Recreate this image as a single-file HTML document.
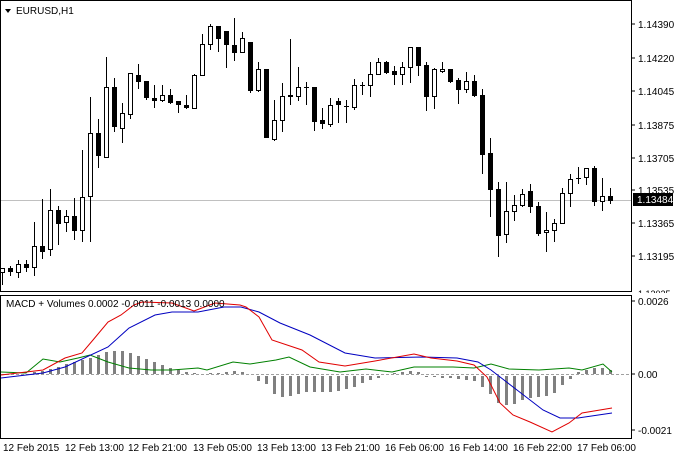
<!DOCTYPE html>
<html><head><meta charset="utf-8"><style>
html,body{margin:0;padding:0;background:#fff;}
svg{display:block;font-family:"Liberation Sans",sans-serif;font-size:10px;}
</style></head><body>
<svg id="s" width="674" height="455" xmlns="http://www.w3.org/2000/svg">
<rect x="0" y="0" width="674" height="455" fill="#fff"/>
<text x="638" y="297" font-size="9">1.13025</text>
<rect x="632" y="293" width="42" height="10" fill="#fff"/>
<rect x="0.5" y="0.5" width="631" height="291" fill="none" stroke="#000"/>
<rect x="0.5" y="295.5" width="631" height="143" fill="none" stroke="#000"/>
<line x1="1" y1="200.5" x2="631" y2="200.5" stroke="#c0c0c0"/>
<line x1="1" y1="374.5" x2="631" y2="374.5" stroke="#a0a0a0" stroke-dasharray="3,2"/>
<g id="c"></g>
<polygon points="5,9 11,9 8,13" fill="#000"/>
<text x="16" y="14">EURUSD,H1</text>
<g id="h"></g>
<polyline fill="none" stroke="#008000" points="1,372 26,373 43,359 60,362 78,358 90,355 108,362 129,368 151,370 172,370 198,368 207,370 233,362 250,364 276,360 289,357 310,367 340,372 366,369 392,372 414,367 453,367 474,368 491,364 509,369 539,370 569,368 582,370 603,364 612,372"/>
<polyline fill="none" stroke="#0000c0" points="1,378 43,373 65,367 108,347 129,328 155,315 172,312 198,312 224,307 241,307 259,312 280,323 310,335 345,353 375,358 422,357 457,358 478,362 491,370 517,390 543,410 560,418 578,418 612,413"/>
<polyline fill="none" stroke="#e00000" points="1,375 43,370 65,358 82,353 93,340 108,322 121,315 134,305 142,302 172,303 194,311 215,303 240,305 246,307 259,317 272,340 302,350 319,362 345,366 375,361 414,354 431,358 457,361 474,365 487,377 500,403 513,415 530,422 552,432 569,423 582,413 612,408"/>
<text x="6" y="307">MACD + Volumes 0.0002 -0.0011 -0.0013 0.0000</text>
<g fill="#000">
<text x="638" y="28">1.14390</text>
<text x="638" y="62">1.14220</text>
<text x="638" y="95">1.14045</text>
<text x="638" y="129">1.13875</text>
<text x="638" y="162">1.13705</text>
<text x="638" y="194">1.13535</text>
<text x="638" y="227">1.13365</text>
<text x="638" y="260">1.13195</text>
<text x="638" y="305">0.0026</text>
<text x="638" y="378">0.00</text>
<text x="638" y="434">-0.0021</text>
</g>
<rect x="633" y="193" width="40" height="13" fill="#000"/>
<text x="637" y="203" fill="#fff">1.13484</text>
<g stroke="#000">
<line x1="632" y1="24" x2="635" y2="24"/><line x1="632" y1="58" x2="635" y2="58"/><line x1="632" y1="91" x2="635" y2="91"/><line x1="632" y1="125" x2="635" y2="125"/><line x1="632" y1="158" x2="635" y2="158"/><line x1="632" y1="190" x2="635" y2="190"/><line x1="632" y1="223" x2="635" y2="223"/><line x1="632" y1="256" x2="635" y2="256"/>
<line x1="632" y1="301" x2="635" y2="301"/><line x1="632" y1="374" x2="635" y2="374"/><line x1="632" y1="430" x2="635" y2="430"/>
</g>
<g fill="#000" font-size="10">
<text x="3" y="451">12 Feb 2015</text>
<text x="65" y="451">12 Feb 13:00</text>
<text x="128" y="451">12 Feb 21:00</text>
<text x="193" y="451">13 Feb 05:00</text>
<text x="257" y="451">13 Feb 13:00</text>
<text x="321" y="451">13 Feb 21:00</text>
<text x="385" y="451">16 Feb 06:00</text>
<text x="449" y="451">16 Feb 14:00</text>
<text x="513" y="451">16 Feb 22:00</text>
<text x="577" y="451">17 Feb 06:00</text>
</g>
</svg>
<script>
var C=[[2,268,272,268,285,1],[10,268,271,266,276,0],[18,264,272,260,278,1],[26,264,267,260,272,0],[34,246,267,222,276,1],[42,246,251,199,259,0],[50,210,249,189,256,1],[58,210,223,206,245,0],[66,216,222,210,232,1],[74,216,230,198,240,0],[82,197,230,150,242,1],[90,133,196,97,242,1],[98,133,155,119,168,0],[106,87,157,57,157,1],[114,87,126,78,132,0],[122,113,128,103,143,1],[130,73,114,73,119,1],[138,75,81,64,89,0],[146,81,97,81,100,0],[154,98,100,85,108,0],[162,95,100,85,102,1],[170,95,102,89,104,0],[178,101,104,101,113,0],[186,105,107,95,109,0],[194,75,108,74,108,1],[202,44,75,34,76,1],[210,26,44,24,50,1],[218,26,38,26,52,0],[226,31,44,31,68,0],[234,45,52,18,61,0],[242,38,52,32,52,1],[250,42,90,42,93,0],[258,69,90,62,92,1],[266,69,137,69,137,0],[274,120,139,100,141,1],[282,96,120,83,132,1],[290,95,96,39,105,0],[298,87,96,67,101,1],[306,87,87,82,105,0],[314,87,121,87,131,0],[322,120,123,108,129,0],[330,105,124,98,127,1],[338,101,104,98,123,0],[346,106,106,100,123,0],[354,85,107,79,110,1],[362,85,85,82,95,0],[370,74,85,62,97,1],[378,62,74,58,74,1],[386,62,72,61,74,0],[394,71,74,66,85,0],[402,67,74,62,85,1],[410,47,67,47,83,1],[418,47,65,47,76,0],[426,65,96,62,111,0],[434,69,96,68,109,1],[442,69,71,62,73,1],[450,69,81,69,83,0],[458,80,89,78,104,0],[466,81,89,72,93,1],[474,81,95,75,97,0],[482,95,154,89,174,0],[490,153,189,138,217,0],[498,189,235,182,257,0],[506,211,234,182,243,1],[514,205,211,195,221,1],[522,194,205,189,207,1],[530,191,206,184,213,0],[538,206,233,202,236,0],[546,230,232,212,252,1],[554,223,230,219,242,1],[562,193,223,188,223,1],[570,179,193,174,207,1],[578,178,178,167,184,0],[586,168,177,168,185,1],[594,168,201,166,206,0],[602,196,201,178,211,1],[610,196,200,188,204,0]];
var s='';C.forEach(function(c){var x=c[0];s+='<line x1="'+(x+.5)+'" y1="'+c[3]+'" x2="'+(x+.5)+'" y2="'+c[4]+'" stroke="#000"/>';var h=c[2]-c[1];if(h<1){s+='<line x1="'+(x-2)+'" y1="'+(c[1]+.5)+'" x2="'+(x+3)+'" y2="'+(c[1]+.5)+'" stroke="#000"/>';}else if(c[5]){s+='<rect x="'+(x-1.5)+'" y="'+(c[1]+.5)+'" width="4" height="'+h+'" fill="#fff" stroke="#000"/>';}else{s+='<rect x="'+(x-2)+'" y="'+c[1]+'" width="5" height="'+(h+1)+'" fill="#000"/>';}});
document.getElementById('c').innerHTML=s;
var H=[0,0,0,0,2,3,5,7,10,12,14,16,19,22,23,23,21,18,15,12,9,6,4,2,1,0,1,1,2,3,2,0,-5,-8,-18,-21,-20,-18,-16,-16,-16,-16,-15,-13,-11,-7,-4,-2,0,1,2,3,2,-1,-1,-2,-2,-3,-4,-5,-11,-18,-27,-29,-28,-24,-22,-21,-20,-17,-9,-3,2,4,6,6,4];
var t='';for(var i=0;i<C.length;i++){var v=H[i]||0;if(v==0)continue;var x=C[i][0]-1;if(v>0)t+='<rect x="'+x+'" y="'+(374-v)+'" width="3" height="'+v+'" fill="#808080"/>';else t+='<rect x="'+x+'" y="376" width="3" height="'+(-v)+'" fill="#808080"/>';}
document.getElementById('h').innerHTML=t;
</script>
</body></html>
